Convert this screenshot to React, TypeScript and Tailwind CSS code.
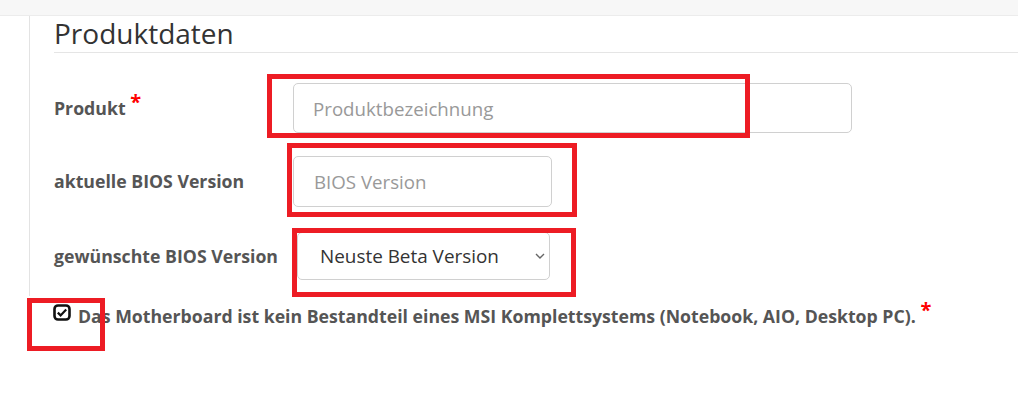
const font = "font-['Open_Sans',sans-serif]";

function Chevron() {
  return (
    <svg width="10" height="6" viewBox="0 0 10 6" fill="none" className="text-[#666]">
      <path d="M1 1l4 4 4-4" stroke="currentColor" strokeWidth="1.4" />
    </svg>
  );
}

function CheckIcon() {
  return (
    <svg width="18" height="17" viewBox="0 0 18 17" fill="none">
      <rect x="1.5" y="1.5" width="15" height="14" rx="3.5" stroke="#111" strokeWidth="2.6" />
      <path d="M4.8 8.6l2.8 2.8 5.6-6" stroke="#111" strokeWidth="2.2" />
    </svg>
  );
}

export default function App() {
  return (
    <div className={`relative h-[411px] w-[1018px] overflow-hidden bg-white text-[#555] ${font}`}>
      <div className="h-[16px] border-b border-[#ececec] bg-[#f7f7f7]" />

      <div className="ml-[29px] border-l border-[#e3e3e3] pb-[16px] pl-[24px]">
        <div className="h-[37px] border-b border-[#e5e5e5]">
          <h2 className="text-[28px] leading-[34px] text-[#333]">Produktdaten</h2>
        </div>

        <div className="mt-[30px] flex items-center">
          <label className="w-[239px] text-[17.7px] font-bold">
            Produkt <span className="relative -top-[6px] text-[20px] text-[#f00]">*</span>
          </label>
          <input
            placeholder="Produktbezeichnung"
            className="h-[50px] w-[559px] rounded-[5px] border border-[#d0d0d0] px-[19px] text-[18.7px] text-[#333] placeholder:text-[#999]"
          />
        </div>

        <div className="mt-[23px] flex items-center">
          <label className="w-[239px] text-[17.7px] font-bold">aktuelle BIOS Version</label>
          <input
            placeholder="BIOS Version"
            className="h-[51px] w-[259px] rounded-[5px] border border-[#d0d0d0] px-[20px] text-[18.7px] text-[#333] placeholder:text-[#999]"
          />
        </div>

        <div className="mt-[25px] flex items-center">
          <label className="w-[243px] text-[17.7px] font-bold">gewünschte BIOS Version</label>
          <div className="flex h-[48px] w-[253px] items-center justify-between rounded-[5px] border border-[#d0d0d0] pl-[22px] pr-[4px] text-[18.9px] text-[#333]">
            <span>Neuste Beta Version</span>
            <Chevron />
          </div>
        </div>
      </div>

      <div className="ml-[53px] mt-[8px] flex items-start gap-[7px]">
        <CheckIcon />
        <p className="-mt-[3px] text-[17.7px] font-bold">
          Das Motherboard ist kein Bestandteil eines MSI Komplettsystems (Notebook, AIO, Desktop PC).{" "}
          <span className="relative -top-[6px] text-[20px] text-[#f00]">*</span>
        </p>
      </div>

      {/* red annotation boxes */}
      <div className="absolute left-[267px] top-[74px] h-[64px] w-[483px] border-[5px] border-[#ed1c24]" />
      <div className="absolute left-[287px] top-[143px] h-[74px] w-[290px] border-[5px] border-[#ed1c24]" />
      <div className="absolute left-[292px] top-[228px] h-[69px] w-[284px] border-[5px] border-[#ed1c24]" />
      <div className="absolute left-[27px] top-[298px] h-[53px] w-[78px] border-[5px] border-[#ed1c24]" />
    </div>
  );
}
